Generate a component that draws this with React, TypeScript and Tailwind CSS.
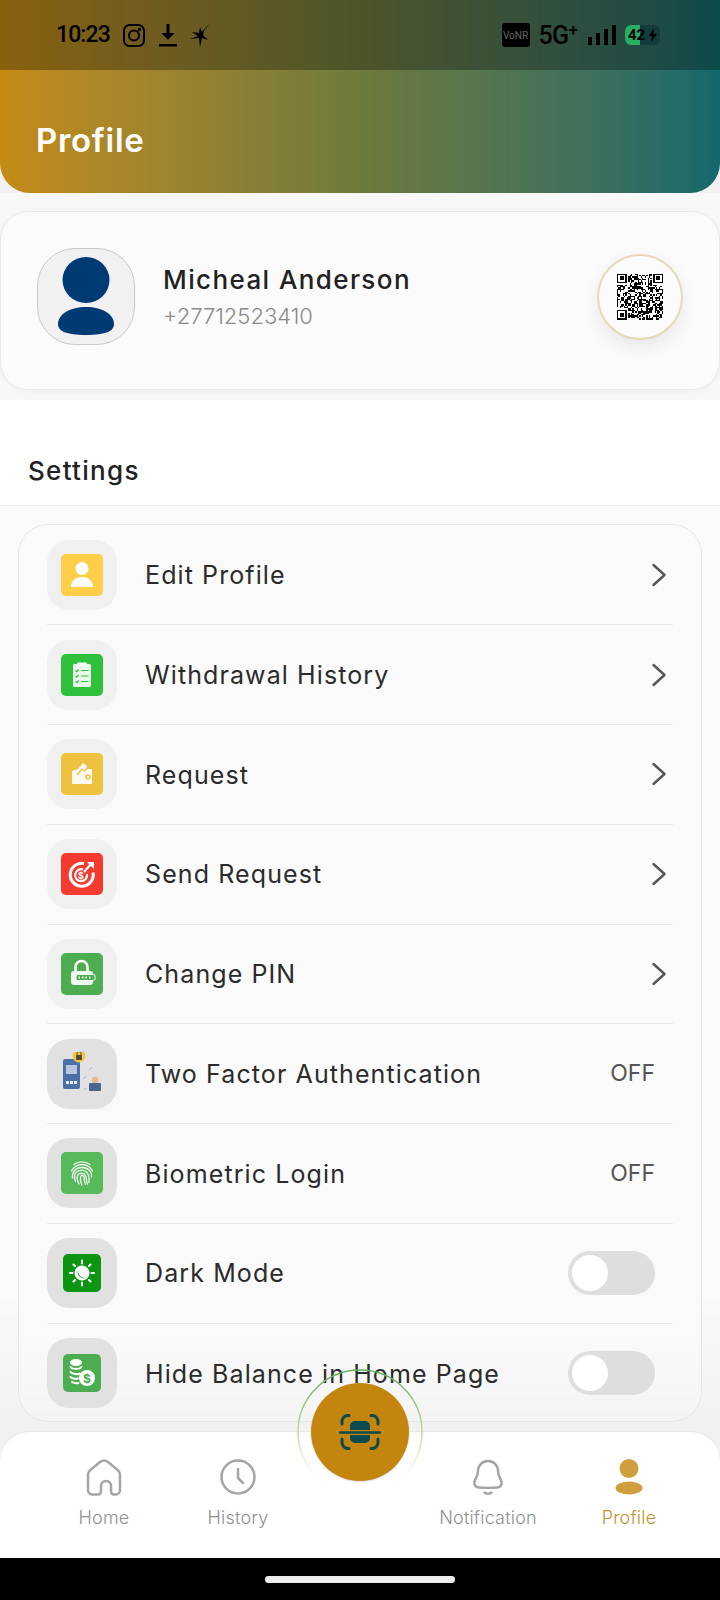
import type { ReactNode } from "react";

// tiny deterministic pattern, just has to read as a QR code at 46px
function QrCode() {
  const size = 33;
  const cells: ReactNode[] = [];
  let seed = 1337;
  const inFinder = (x: number, y: number) =>
    (x < 8 && y < 8) || (x >= size - 8 && y < 8) || (x < 8 && y >= size - 8);
  for (let y = 0; y < size; y++) {
    for (let x = 0; x < size; x++) {
      seed = (seed * 1103515245 + 12345) & 0x7fffffff;
      if (!inFinder(x, y) && (seed >> 16) % 100 < 52) {
        cells.push(<rect key={`${x}-${y}`} x={x} y={y} width={1} height={1} fill="#000" />);
      }
    }
  }
  const finder = (x: number, y: number) => (
    <g key={`f${x}${y}`}>
      <rect x={x} y={y} width={7} height={7} fill="#000" />
      <rect x={x + 1} y={y + 1} width={5} height={5} fill="#fff" />
      <rect x={x + 2} y={y + 2} width={3} height={3} fill="#000" />
    </g>
  );
  return (
    <svg width={46} height={47} viewBox="0 0 33 33" shapeRendering="crispEdges">
      {cells}
      {finder(0, 0)}
      {finder(26, 0)}
      {finder(0, 26)}
    </svg>
  );
}

const UserIcon = () => (
  <svg width={42} height={42} viewBox="0 0 42 42" fill="#fff">
    <circle cx={21} cy={14.5} r={6.5} />
    <path d="M10 33c0-6.5 4.5-10 11-10s11 3.500 11 10z" />
  </svg>
);

const ClipboardIcon = () => (
  <svg width={42} height={42} viewBox="0 0 42 42">
    <rect x={12} y={10} width={18} height={23} rx={1.5} fill="#fff" fillOpacity={0.9} />
    <rect x={16} y={8.500} width={10} height={3.500} rx={1} fill="#fff" />
    <path d="M14.500 16.500l1.200 1.200 2-2.200M14.500 22l1.200 1.200 2-2.200M14.500 27.500l1.200 1.200 2-2.200M20 16.500h7.500M20 22h7.500M20 27.500h7.500" stroke="#2fc03c" strokeWidth={1.2} fill="none" />
  </svg>
);

const WalletIcon = () => (
  <svg width={42} height={42} viewBox="0 0 42 42">
    <path d="M11 18l6-2 5-6 4 3-1 3h6v15H11z" fill="#fff" fillOpacity={0.92} />
    <path d="M16 22l5-6 3 2 5-6" stroke="#eec23f" strokeWidth={1.300} fill="none" />
    <circle cx={27} cy={24} r={2.800} fill="#eec23f" />
    <circle cx={27} cy={24} r={1.200} fill="#fff" />
  </svg>
);

const TargetDollarIcon = () => (
  <svg width={42} height={42} viewBox="0 0 42 42" fill="none">
    <path d="M23 10.500a11.500 11.500 0 1 0 9 9" stroke="#fff" strokeWidth={3} />
    <path d="M22 16.500a6 6 0 1 0 4 4.500" stroke="#fff" strokeWidth={2.200} />
    <path d="M23 19l7-8" stroke="#fff" strokeWidth={2.200} />
    <path d="M26 9h7v7z" fill="#fff" />
    <text x={20} y={25.500} fontSize={9} fontWeight={700} fill="#fff" textAnchor="middle">$</text>
  </svg>
);

const LockIcon = () => (
  <svg width={42} height={42} viewBox="0 0 42 42" fill="none">
    <path d="M14.500 18v-4a6 6 0 0 1 12 0v4" stroke="#fff" strokeWidth={2.500} />
    <rect x={10} y={18} width={22} height={14} rx={3} fill="#fff" fillOpacity={0.92} />
    <rect x={15} y={21.500} width={19} height={6} rx={1.500} fill="#4cae50" stroke="#fff" strokeWidth={1} />
    <path d="M17.500 24.500h1.500M21 24.500h1.500M24.500 24.500h1.500M28 24.500h1.500" stroke="#fff" strokeWidth={1.800} />
  </svg>
);

const TwoFactorIcon = () => (
  <svg width={42} height={42} viewBox="0 0 42 42" className="-mt-[1px]">
    <rect x={2} y={7} width={17} height={30} rx={2} fill="#4c6fa8" />
    <rect x={5} y={13} width={11} height={9} fill="#b9c7de" />
    <path d="M5 29h3v3H5zM9 29h3v3H9zM13 29h3v3h-3z" fill="#e6ecf5" />
    <circle cx={18} cy={4} r={6.500} fill="#f1c64a" />
    <rect x={15} y={3} width={6} height={5} rx={0.800} fill="#5a4a2a" />
    <path d="M16 3V1.500a2 2 0 0 1 4 0V3" stroke="#5a4a2a" strokeWidth={1} fill="none" />
    <circle cx={34} cy={28} r={3.200} fill="#e9b888" />
    <rect x={28} y={31} width={12} height={8} rx={1} fill="#46658f" />
    <path d="M22 27l3-3M28 18l3-3M23 37h3" stroke="#9fb2cc" strokeWidth={0.900} />
  </svg>
);

const FingerprintIcon = () => (
  <svg width={42} height={42} viewBox="0 0 42 42" fill="none" stroke="#fff" strokeOpacity={0.9} strokeWidth={1.300} strokeLinecap="round">
    <path d="M13 12.500c4.500-3.500 11-3.500 16 0" />
    <path d="M10.500 19c3-5 7-6.500 10.500-6.500S28.500 14 31.500 19" />
    <path d="M11.500 26c-.500-6 3-10.500 9.500-10.500S31 20 30.500 25" />
    <path d="M14.500 29.500c-1-3-1.500-6 0-8.500s8-4.500 11.500-.500 1.500 6 2 10" />
    <path d="M18 32c-1.500-3-2.500-6-1.500-8.500s6.500-3.500 8 0 .500 6 2 8.500" />
    <path d="M21 33c-1.500-3-2-5.500-1.500-8s3.500-1.500 3.500 0 .500 5.500 1.500 7.500" />
  </svg>
);

const SunMoonIcon = () => (
  <svg width={38} height={38} viewBox="0 0 38 38" fill="none">
    <circle cx={19} cy={19} r={7.500} fill="#fff" />
    <path d="M15 16.500a6 6 0 0 0 7.500 7.500 7 7 0 0 1-7.500-7.500z" fill="#0c9510" />
    <path d="M19 6.500v3M19 28.500v3M7 19h2.500M28.500 19H31M10.500 10.500l1.500 1.500M26 26l1.500 1.500M10.500 27.500L12 26M26 12l1.500-1.500" stroke="#fff" strokeWidth={2} strokeLinecap="round" />
  </svg>
);

const CoinsIcon = () => (
  <svg width={38} height={38} viewBox="0 0 38 38">
    <ellipse cx={13} cy={8.500} rx={6} ry={3.500} fill="#fff" />
    <path d="M7.500 13c2 2.500 9 2.500 11 0M7.500 18c2 2.500 8 2.500 9 1.500M7.500 23c2 2 6 2 7.500 1.500M9 28c2 1.500 4 1.500 6.500 1" stroke="#fff" strokeWidth={2} fill="none" strokeLinecap="round" />
    <circle cx={24} cy={24} r={8} fill="#fff" />
    <text x={24} y={28.500} fontSize={12} fontWeight={700} fill="#4cae50" textAnchor="middle">$</text>
  </svg>
);

type Row = {
  label: string;
  color?: string;
  icon: ReactNode;
  small?: boolean;
  dark?: boolean;
  trail: "chevron" | "off" | "toggle";
};

const rows: Row[] = [
  { label: "Edit Profile", color: "bg-[#ffcf4a]", icon: <UserIcon />, trail: "chevron" },
  { label: "Withdrawal History", color: "bg-[#2fc03c]", icon: <ClipboardIcon />, trail: "chevron" },
  { label: "Request", color: "bg-[#eec23f]", icon: <WalletIcon />, trail: "chevron" },
  { label: "Send Request", color: "bg-[#f53b30]", icon: <TargetDollarIcon />, trail: "chevron" },
  { label: "Change PIN", color: "bg-[#4cae50]", icon: <LockIcon />, trail: "chevron" },
  { label: "Two Factor Authentication", icon: <TwoFactorIcon />, dark: true, trail: "off" },
  { label: "Biometric Login", color: "bg-[#56b95a]", icon: <FingerprintIcon />, dark: true, trail: "off" },
  { label: "Dark Mode", color: "bg-[#0c9510]", icon: <SunMoonIcon />, small: true, dark: true, trail: "toggle" },
  { label: "Hide Balance in Home Page", color: "bg-[#4cae50]", icon: <CoinsIcon />, small: true, dark: true, trail: "toggle" },
];

function SettingRow({ row, last }: { row: Row; last: boolean }) {
  return (
    <div className={`flex h-[99.75px] items-center ${last ? "" : "border-b-[1.5px] border-[#e6e6e6]"}`}>
      <div className={`flex h-[70px] w-[70px] shrink-0 items-center justify-center rounded-[22px] ${row.dark ? "bg-[#e1e1e1]" : "bg-[#f0f0f0]"}`}>
        <div className={`flex items-center justify-center rounded-[5px] ${row.small ? "h-[38px] w-[38px]" : "h-[42px] w-[42px]"} ${row.color ?? ""}`}>
          {row.icon}
        </div>
      </div>
      <span className="ml-[28px] flex-1 pt-[2px] text-[25px] tracking-[1.1px] text-[#2b2b2b]">{row.label}</span>
      {row.trail === "chevron" && (
        <svg width={16} height={24} viewBox="0 0 16 24" fill="none" stroke="#555555" strokeWidth={2.400} strokeLinecap="round" strokeLinejoin="round" className="mr-[6px]">
          <path d="M2.500 2l11 10-11 10" />
        </svg>
      )}
      {row.trail === "off" && <span className="mr-[18px] text-[23px] text-[#555555]">OFF</span>}
      {row.trail === "toggle" && (
        <div className="mr-[18px] flex h-[44px] w-[87px] items-center rounded-full bg-[#dedede] pl-[4px]">
          <div className="h-[36px] w-[36px] rounded-full bg-white" />
        </div>
      )}
    </div>
  );
}

function NavItem({ label, icon, className, text }: { label: string; icon: ReactNode; className?: string; text: string }) {
  return (
    <div className={`flex w-[130px] flex-col items-center ${className ?? ""}`}>
      <div className="flex h-[36px] items-center justify-center">{icon}</div>
      <span className={`mt-[11px] text-[18px] font-light leading-[24px] tracking-[0.2px] ${text}`}>{label}</span>
    </div>
  );
}

export default function App() {
  return (
    <div className="relative flex h-[1600px] w-[720px] flex-col overflow-hidden bg-[#f1f1f1] font-['Inter',sans-serif]">
      {/* Header with status bar */}
      <div className="h-[193px] shrink-0 rounded-b-[30px] bg-gradient-to-r from-[#c48b14] via-[#6e7a3c] to-[#12696b]">
        <div className="flex h-[70px] items-center bg-black/30 pl-[56px] pr-[60px] text-black">
          <span className="font-['Roboto',sans-serif] text-[23px] font-medium tracking-[-0.9px]">10:23</span>
          <svg width={22} height={23} viewBox="0 0 22 23" fill="none" stroke="#000" strokeWidth={2} className="ml-[13px]">
            <rect x={1} y={1} width={20} height={21} rx={5.500} />
            <circle cx={11} cy={11.500} r={5} />
            <circle cx={16.500} cy={5.500} r={0.700} fill="#000" />
          </svg>
          <svg width={18} height={23} viewBox="0 0 18 23" className="ml-[14px]">
            <path d="M7.500 0h3v9h5L9 16 2.500 9h5z" fill="#000" />
            <rect x={0} y={20} width={18} height={2.500} fill="#000" />
          </svg>
          <svg width={20} height={24} viewBox="0 0 20 24" className="ml-[13px]">
            <path d="M20 0L12 9l-2-5-1 6-7-1 6 4-8 3 9-1 1 9 2-9 6 2-5-5 1-4z" fill="#000" />
          </svg>
          <div className="ml-auto flex h-[24px] w-[28px] items-center justify-center rounded-[3px] bg-black font-['Roboto',sans-serif] text-[10px] text-[#666666]">VoNR</div>
          <span className="ml-[9px] font-['Roboto',sans-serif] text-[25px] font-medium leading-none tracking-[-0.6px]">5G</span>
          <span className="-mt-[10px] font-['Roboto',sans-serif] text-[17px] font-medium leading-none">+</span>
          <svg width={28} height={20} viewBox="0 0 28 20" className="ml-[10px]" fill="#000">
            <rect x={0} y={12} width={4} height={8} />
            <rect x={8} y={8} width={4} height={12} />
            <rect x={16} y={4} width={4} height={16} />
            <rect x={24} y={0} width={4} height={20} />
          </svg>
          <div className="relative ml-[9px] flex h-[20px] w-[35px] items-center overflow-hidden rounded-[6px] bg-[#143c3c]">
            <div className="h-full w-[15px] bg-[#27ae60]" />
            <span className="absolute left-[3px] font-['Roboto',sans-serif] text-[15px] font-bold leading-none">42</span>
            <svg width={8} height={14} viewBox="0 0 8 14" className="absolute right-[3px]">
              <path d="M5 0L0 8h3l-1 6 6-8H4.500z" fill="#000" />
            </svg>
          </div>
        </div>
        <div className="flex h-[123px] items-center pl-[36px] pt-[19px] text-[33px] font-semibold tracking-[0.7px] text-white">Profile</div>
      </div>

      {/* Profile card */}
      <div className="h-[207px] shrink-0 bg-[#f8f8f8] pt-[18px]">
        <div className="flex h-[179px] items-center rounded-[28px] border-[1.5px] border-[#e8e8e8] bg-[#fbfbfb] pb-[8px] pl-[36px] pr-[36px] shadow-[0_2px_6px_rgba(0,0,0,0.04)]">
          <div className="flex h-[97px] w-[98px] shrink-0 flex-col items-center rounded-[38px] border-[1.5px] border-[#c9c9c9] bg-[#f1f1f1] pt-[8px]">
            <svg width={58} height={80} viewBox="0 0 58 80" fill="#003a75">
              <ellipse cx={29} cy={23} rx={23.500} ry={23} />
              <path d="M1 67c0-10 12-17 28-17s28 7 28 17c0 7-8 11-28 11S1 74 1 67z" />
            </svg>
          </div>
          <div className="ml-[28px] flex-1">
            <div className="text-[26px] font-medium leading-[32px] tracking-[1.4px] text-[#222222]">Micheal Anderson</div>
            <div className="mt-[6px] text-[22px] font-light leading-[28px] text-[#8a8a8a]">+27712523410</div>
          </div>
          <div className="flex h-[86px] w-[86px] items-center justify-center rounded-full border-2 border-[#e6d9b8] bg-[#fbfbfb] shadow-[0_8px_18px_rgba(0,0,0,0.08)]">
            <QrCode />
          </div>
        </div>
      </div>

      {/* Settings title */}
      <div className="flex h-[106px] shrink-0 items-end border-b-[1.5px] border-[#eeeeee] bg-white pb-[18px] pl-[28px] text-[26px] font-medium leading-[32px] tracking-[1.3px] text-[#222222]">
        Settings
      </div>

      {/* Settings list */}
      <div className="flex-1 bg-gradient-to-b from-[#fafafa] from-85% to-[#f1f1f1] px-[18px] pt-[18px]">
        <div className="h-[898px] rounded-[30px] border-[1.5px] border-[#e6e6e6] bg-gradient-to-b from-[#fafafa] from-90% to-[#f4f4f4] pl-[28px] pr-[28px] pt-[0.5px]">
          {rows.map((row, i) => (
            <SettingRow key={row.label} row={row} last={i === rows.length - 1} />
          ))}
        </div>
      </div>

      {/* Bottom nav */}
      <div className="relative h-[127px] shrink-0 rounded-t-[30px] border-t-[1.5px] border-[#e8e8e8] bg-white pl-[39px] pt-[27px]">
        <div className="flex">
          <NavItem
            label="Home"
            text="text-[#8f8f8f]"
            icon={
              <svg width={36} height={37} viewBox="0 0 36 37" fill="none" stroke="#a5a5a5" strokeWidth={2.500} strokeLinejoin="round">
                <path d="M2 16c0-2 1-4 3-5.500l9-7.500c2.300-1.700 5.700-1.700 8 0l9 7.500c2 1.500 3 3.500 3 5.500v15c0 2.500-2 4.500-4 4.500h-2c-2 0-3-1.500-3-3.500v-5c0-3-2-5-5-5s-5 2-5 5v5c0 2-1 3.500-3 3.500H6c-2 0-4-2-4-4.500z" />
              </svg>
            }
          />
          <NavItem
            label="History"
            className="ml-[4px]"
            text="text-[#8f8f8f]"
            icon={
              <svg width={36} height={36} viewBox="0 0 36 36" fill="none" stroke="#a5a5a5" strokeWidth={2.500} strokeLinecap="round" strokeLinejoin="round">
                <circle cx={18} cy={18} r={16.500} />
                <path d="M18 10v9l5 5" />
              </svg>
            }
          />
          <NavItem
            label="Notification"
            className="ml-[120px]"
            text="text-[#8f8f8f]"
            icon={
              <svg width={32} height={36} viewBox="0 0 32 36" fill="none" stroke="#a5a5a5" strokeWidth={2.500} strokeLinecap="round">
                <path d="M6 12a10 10 0 0 1 20 0c0 3 .500 5 2.500 8 2 3 2 8-3.500 8.500-6 .500-12 .500-18 0C1.500 28 1.500 23 3.500 20 5.500 17 6 15 6 12z" />
                <path d="M12.500 33.500c2 1.500 5 1.500 7 0" />
              </svg>
            }
          />
          <NavItem
            label="Profile"
            className="ml-[11px]"
            text="text-[#c2922f]"
            icon={
              <svg width={30} height={36} viewBox="0 0 30 36" fill="#cf9f3e">
                <ellipse cx={15} cy={9.500} rx={9.500} ry={9.500} />
                <ellipse cx={15} cy={29} rx={13.500} ry={6.500} />
              </svg>
            }
          />
        </div>

        {/* Scan button sits over the nav edge */}
        <svg width={128} height={128} viewBox="0 0 128 128" fill="none" className="absolute left-[296px] top-[-64px]">
          <defs>
            <linearGradient id="ring" x1="0" y1="0" x2="0" y2="1">
              <stop offset="0" stopColor="#5fae5a" />
              <stop offset="0.6" stopColor="#d8e6b0" />
              <stop offset="1" stopColor="#ffffff" stopOpacity={0} />
            </linearGradient>
          </defs>
          <circle cx={64} cy={64} r={62} stroke="url(#ring)" strokeWidth={1.500} />
        </svg>
        <div className="absolute left-[311px] top-[-49px] flex h-[98px] w-[98px] items-center justify-center rounded-full bg-[#c4850f] shadow-[0_1px_2px_rgba(0,0,0,0.15)]">
          <svg width={42} height={36} viewBox="0 0 42 36" fill="none" stroke="#0d4a50" strokeWidth={3} strokeLinecap="round">
            <path d="M10 1.500H9a6 6 0 0 0-6 6V10M32 1.500h1a6 6 0 0 1 6 6V10M10 34.500H9a6 6 0 0 1-6-6V25M32 34.500h1a6 6 0 0 0 6-6V25" />
            <path d="M1 18.500h40" strokeWidth={2.500} />
            <path d="M11 16v-4a5 5 0 0 1 5-5h10a5 5 0 0 1 5 5v4zM11 21h20v3a5 5 0 0 1-5 5H16a5 5 0 0 1-5-5z" fill="#0d4a50" stroke="none" />
          </svg>
        </div>
      </div>

      {/* Android gesture area */}
      <div className="flex h-[42px] shrink-0 items-center justify-center bg-black">
        <div className="h-[7px] w-[190px] rounded-full bg-[#eeeeee]" />
      </div>
    </div>
  );
}
